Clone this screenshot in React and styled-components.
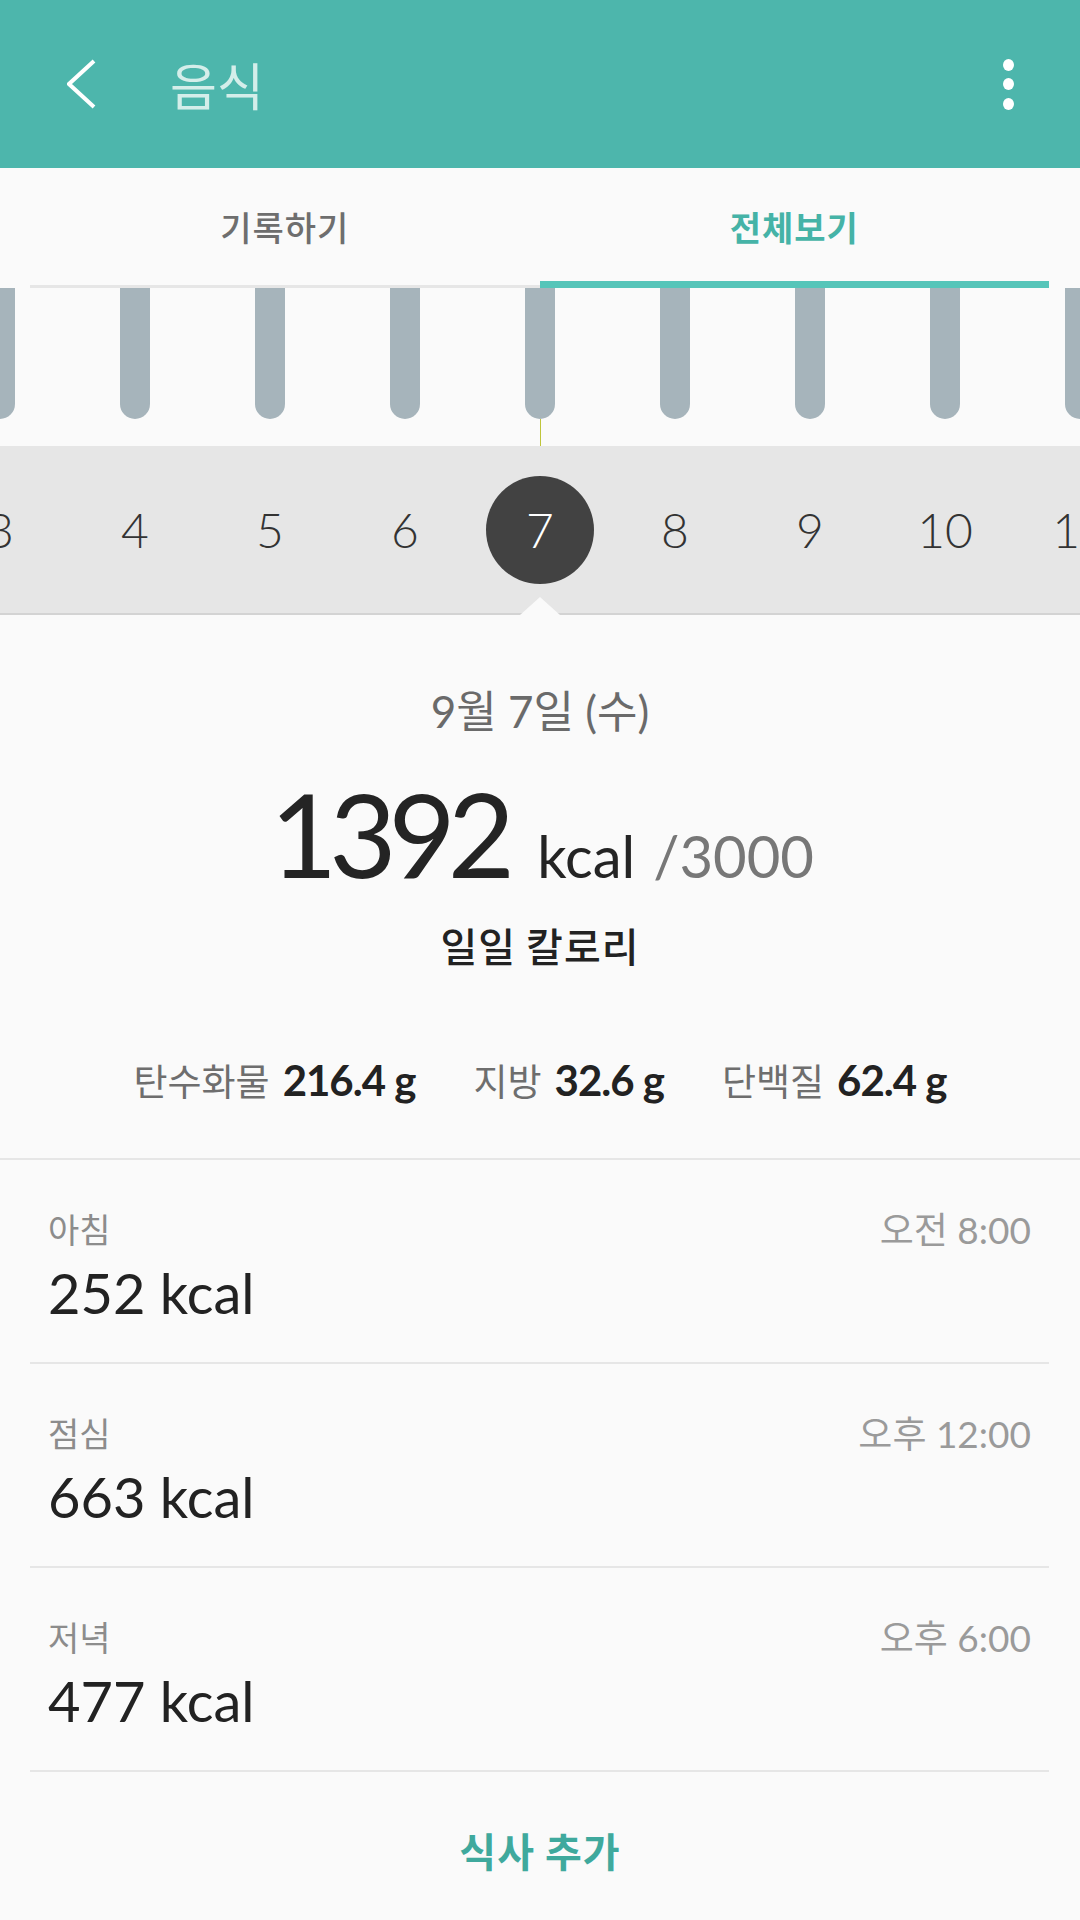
import React from 'react'
import styled, { createGlobalStyle } from 'styled-components'

const GlobalStyle = createGlobalStyle`
  html, body {
    margin: 0;
    padding: 0;
    background: #fafafa;
  }
  body {
    font-family: Lato, "Noto Sans CJK KR", "Noto Sans", sans-serif;
  }
`

const Screen = styled.div`
  width: 1080px;
  height: 1920px;
  overflow: hidden;
  background: #fafafa;
`

const AppBar = styled.header`
  height: 168px;
  background: #4db6ac;
  display: flex;
  align-items: center;
  padding: 0 66px 0 67px;
  box-sizing: border-box;
`

const BackButton = styled.div`
  width: 30px;
  height: 50px;
  display: flex;
  align-items: center;
`

const Title = styled.h1`
  margin: 0 0 0 73px;
  flex: 1;
  font-family: "Noto Sans CJK KR", sans-serif;
  font-size: 51px;
  font-weight: 400;
  color: #d4eeea;
`

const Menu = styled.div`
  display: flex;
  flex-direction: column;
  gap: 7.5px;
  span {
    width: 11px;
    height: 12px;
    border-radius: 50%;
    background: #ffffff;
  }
`

const TabBar = styled.nav`
  display: flex;
  padding: 0 31px 0 30px;
  height: 120px;
`

const Tab = styled.div`
  flex: 1;
  box-sizing: border-box;
  height: 120px;
  display: flex;
  align-items: center;
  justify-content: center;
  padding-top: ${({ active }) => (active ? '4px' : '0')};
  border-bottom: ${({ active }) => (active ? '7px solid #56c5b9' : '3px solid #e6e6e6')};
  font-family: "Noto Sans CJK KR", sans-serif;
  font-size: 34px;
  font-weight: ${({ active }) => (active ? 700 : 500)};
  color: ${({ active }) => (active ? '#45b3a7' : '#6e6e6e')};
  letter-spacing: 1px;
`

const Strip = styled.div`
  display: flex;
  justify-content: center;
  overflow: hidden;
  width: 1080px;
`

const Column = styled.div`
  flex: 0 0 135px;
  display: flex;
  flex-direction: column;
  align-items: center;
`

const Chart = styled(Strip)`
  height: 158px;
`

const Bar = styled.div`
  width: 30px;
  height: 131px;
  background: #a6b4bb;
  border-radius: 0 0 15px 15px;
`

const Marker = styled.div`
  width: 1px;
  height: 27px;
  background: #bfc53a;
`

const Dates = styled(Strip)`
  position: relative;
  height: 167px;
  background: #e6e6e6;
  border-bottom: 2px solid #d3d3d3;
  align-items: center;
  overflow: visible;
`

const DateClip = styled(Strip)`
  height: 167px;
  align-items: center;
`

const Day = styled.div`
  width: 108px;
  height: 108px;
  border-radius: 50%;
  display: flex;
  align-items: center;
  justify-content: center;
  font-family: Lato, sans-serif;
  font-size: 48px;
  font-weight: 300;
  color: ${({ active }) => (active ? '#ffffff' : '#333333')};
  background: ${({ active }) => (active ? '#424242' : 'transparent')};
`

const Notch = styled.div`
  position: absolute;
  left: 50%;
  bottom: -2px;
  transform: translateX(-50%);
  width: 0;
  height: 0;
  border-left: 20px solid transparent;
  border-right: 20px solid transparent;
  border-bottom: 18px solid #fafafa;
`

const Summary = styled.section`
  display: flex;
  flex-direction: column;
  align-items: center;
  padding: 71px 0 53px;
  border-bottom: 2px solid #e6e6e6;
`

const DateLine = styled.div`
  font-size: 44px;
  line-height: 50px;
  color: #6a6a6a;
`

const TotalRow = styled.div`
  display: flex;
  align-items: baseline;
  margin-top: 40px;
  margin-left: 4px;
  color: #242424;
`

const Total = styled.span`
  font-size: 116px;
  line-height: 116px;
  letter-spacing: -8px;
  font-weight: 400;
`

const Unit = styled.span`
  font-size: 58px;
  line-height: 58px;
  margin-left: 30px;
`

const Goal = styled.span`
  font-size: 58px;
  line-height: 58px;
  margin-left: 18px;
  color: #777777;
`

const Caption = styled.div`
  margin-top: 28px;
  margin-bottom: 6px;
  font-family: "Noto Sans CJK KR", sans-serif;
  font-size: 40px;
  line-height: 50px;
  font-weight: 500;
  color: #222222;
  letter-spacing: 1px;
`

const Nutrients = styled.div`
  display: flex;
  gap: 58px;
  margin-top: 79px;
  line-height: 50px;
`

const Nutrient = styled.div`
  display: flex;
  align-items: baseline;
  gap: 13px;
  span {
    font-family: "Noto Sans CJK KR", sans-serif;
    font-size: 37px;
    color: #6e6e6e;
  }
  b {
    font-family: Lato, sans-serif;
    font-size: 42px;
    font-weight: 700;
    color: #222222;
    letter-spacing: -1px;
  }
`

const Meals = styled.ul`
  list-style: none;
  margin: 0;
  padding: 0 31px 0 30px;
`

const Meal = styled.li`
  border-bottom: 2px solid #e6e6e6;
  padding: 46px 18px 0;
  height: 156px;
`

const MealHead = styled.div`
  display: flex;
  justify-content: space-between;
  align-items: center;
  height: 44px;
`

const MealName = styled.span`
  font-family: "Noto Sans CJK KR", sans-serif;
  font-size: 34px;
  color: #8c8c8c;
`

const MealTime = styled.span`
  font-size: 37px;
  color: #9a9a9a;
`

const MealKcal = styled.div`
  margin-top: 13px;
  font-size: 56px;
  line-height: 60px;
  color: #222222;
`

const AddMeal = styled.button`
  display: block;
  width: 100%;
  height: 156px;
  border: 0;
  background: transparent;
  font-family: "Noto Sans CJK KR", sans-serif;
  font-size: 40px;
  font-weight: 700;
  color: #3fa99d;
  letter-spacing: 1px;
`

const days = [3, 4, 5, 6, 7, 8, 9, 10, 11]
const meals = [
  { name: '아침', time: '오전 8:00', kcal: 252 },
  { name: '점심', time: '오후 12:00', kcal: 663 },
  { name: '저녁', time: '오후 6:00', kcal: 477 },
]

export default function App() {
  return (
    <Screen>
      <GlobalStyle />
      <AppBar>
        <BackButton>
          <svg width="30" height="50" viewBox="0 0 30 50">
            <polyline points="27,2 2,25 27,48" fill="none" stroke="#fff" strokeWidth="4" />
          </svg>
        </BackButton>
        <Title>음식</Title>
        <Menu>
          <span />
          <span />
          <span />
        </Menu>
      </AppBar>

      <TabBar>
        <Tab>기록하기</Tab>
        <Tab active>전체보기</Tab>
      </TabBar>

      <Chart>
        {days.map((d) => (
          <Column key={d}>
            <Bar />
            {d === 7 && <Marker />}
          </Column>
        ))}
      </Chart>

      <Dates>
        <DateClip>
          {days.map((d) => (
            <Column key={d}>
              <Day active={d === 7}>{d}</Day>
            </Column>
          ))}
        </DateClip>
        <Notch />
      </Dates>

      <Summary>
        <DateLine>9월 7일 (수)</DateLine>
        <TotalRow>
          <Total>1392</Total>
          <Unit>kcal</Unit>
          <Goal>/3000</Goal>
        </TotalRow>
        <Caption>일일 칼로리</Caption>
        <Nutrients>
          <Nutrient>
            <span>탄수화물</span>
            <b>216.4 g</b>
          </Nutrient>
          <Nutrient>
            <span>지방</span>
            <b>32.6 g</b>
          </Nutrient>
          <Nutrient>
            <span>단백질</span>
            <b>62.4 g</b>
          </Nutrient>
        </Nutrients>
      </Summary>

      <Meals>
        {meals.map((m) => (
          <Meal key={m.name}>
            <MealHead>
              <MealName>{m.name}</MealName>
              <MealTime>{m.time}</MealTime>
            </MealHead>
            <MealKcal>{m.kcal} kcal</MealKcal>
          </Meal>
        ))}
      </Meals>

      <AddMeal>식사 추가</AddMeal>
    </Screen>
  )
}
